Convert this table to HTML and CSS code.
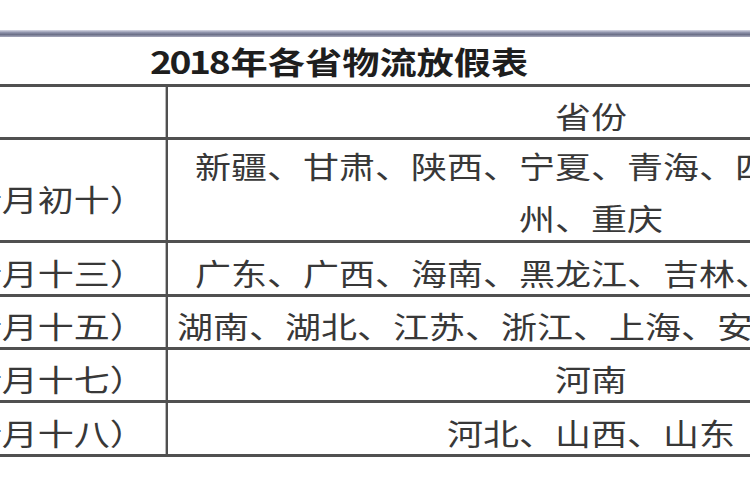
FILE: index.html
```html
<!DOCTYPE html>
<html lang="zh-CN">
<head>
<meta charset="utf-8">
<title>2018年各省物流放假表</title>
<link rel="stylesheet" href="styles.css">
</head>
<body>
<div class="page">
  <div class="sheet">
    <div class="topbar"></div>
    <div class="title"><span class="year">2018</span>年各省物流放假表</div>
    <div class="row row-head">
      <div class="c-left"></div>
      <div class="c-right">省份</div>
    </div>
    <div class="row row-tall">
      <div class="c-left">（腊月初十）</div>
      <div class="c-right multi">新疆、甘肃、陕西、宁夏、青海、四川、云南、贵<br>州、重庆</div>
    </div>
    <div class="row row-b">
      <div class="c-left">（腊月十三）</div>
      <div class="c-right">广东、广西、海南、黑龙江、吉林、辽宁、内蒙古</div>
    </div>
    <div class="row">
      <div class="c-left">（腊月十五）</div>
      <div class="c-right">湖南、湖北、江苏、浙江、上海、安徽、江西、福建</div>
    </div>
    <div class="row">
      <div class="c-left">（腊月十七）</div>
      <div class="c-right">河南</div>
    </div>
    <div class="row row-b">
      <div class="c-left">（腊月十八）</div>
      <div class="c-right">河北、山西、山东</div>
    </div>
  </div>
</div>
</body>
</html>
```
FILE: styles.css
```css
html, body {
  margin: 0;
  padding: 0;
  background: #ffffff;
}

.page {
  width: 750px;
  height: 500px;
  overflow: hidden;
  padding-top: 30px;
  box-sizing: border-box;
  background: #ffffff;
}

.sheet {
  width: 920px;
  margin-left: -75px;
  transform: scaleX(1.2);
  transform-origin: 75px 0;
  font-family: "Noto Sans CJK SC", "Noto Sans", sans-serif;
  color: #383838;
  text-spacing-trim: space-all;
}

.topbar {
  height: 7px;
  background: linear-gradient(#d8dae6, #9094ac 35%, #6c7088 65%, #a9abbe);
}

.title {
  height: 47px;
  display: flex;
  align-items: center;
  padding-left: 200px;
  border-bottom: 3px solid #505050;
  font-size: 31px;
  font-weight: 700;
  color: #1e1e1e;
}

.year {
  letter-spacing: -2px;
  margin-right: 2px;
}

.row {
  display: flex;
  height: 50px;
  border-bottom: 3px solid #505050;
  font-size: 30px;
  line-height: 40px;
}

.row-b {
  height: 51px;
}

.row-tall {
  height: 100px;
}

.c-left {
  width: 215px;
  flex: none;
  box-sizing: border-box;
  border-right: 2.5px solid #505050;
  display: flex;
  align-items: center;
  justify-content: center;
  padding-top: 6px;
  white-space: nowrap;
}

.row-tall .c-left {
  padding-top: 16px;
}

.c-right {
  flex: 1;
  display: flex;
  align-items: center;
  justify-content: center;
  text-align: center;
  padding-top: 6px;
  white-space: nowrap;
}

.multi {
  line-height: 52px;
  padding-top: 2px;
}
```
